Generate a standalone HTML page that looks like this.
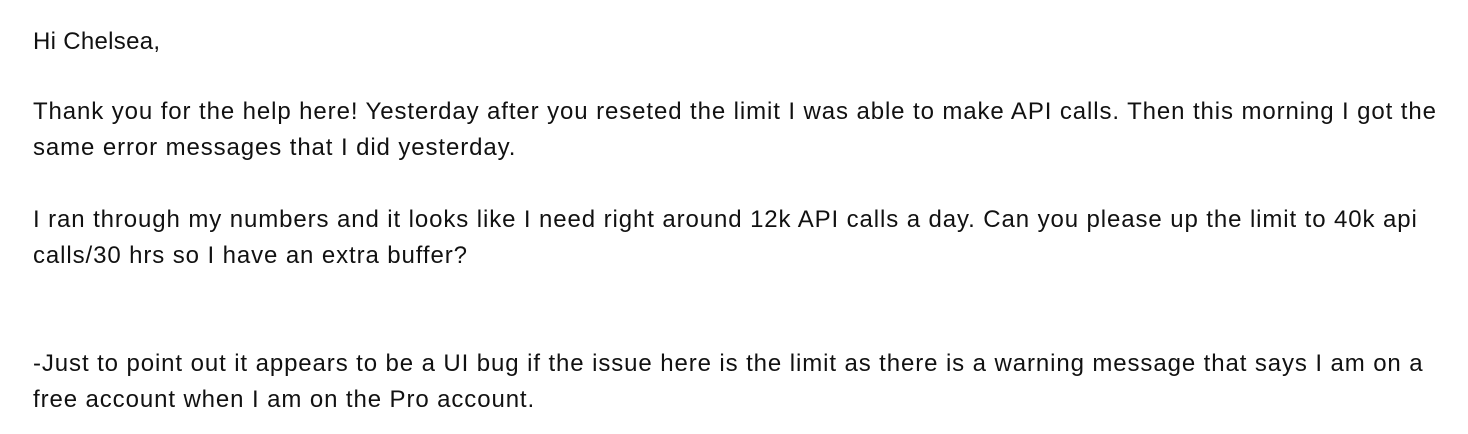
<!DOCTYPE html>
<html><head><meta charset="utf-8"><style>
html,body{margin:0;padding:0;background:#fff;width:1468px;height:434px;overflow:hidden}
.l{position:absolute;left:33px;font-family:"Liberation Sans",Arial,sans-serif;font-size:24px;letter-spacing:0.9px;color:#111;white-space:nowrap;line-height:28px}
</style></head><body>
<div class="l" style="top:28px;letter-spacing:0.3px">Hi Chelsea,</div>
<div class="l" style="top:98px">Thank you for the help here! Yesterday after you reseted the limit I was able to make API calls. Then this morning I got the</div>
<div class="l" style="top:134px">same error messages that I did yesterday.</div>
<div class="l" style="top:206px">I ran through my numbers and it looks like I need right around 12k API calls a day. Can you please up the limit to 40k api</div>
<div class="l" style="top:242px">calls/30 hrs so I have an extra buffer?</div>
<div class="l" style="top:350px">-Just to point out it appears to be a UI bug if the issue here is the limit as there is a warning message that says I am on a</div>
<div class="l" style="top:386px">free account when I am on the Pro account.</div>
</body></html>
